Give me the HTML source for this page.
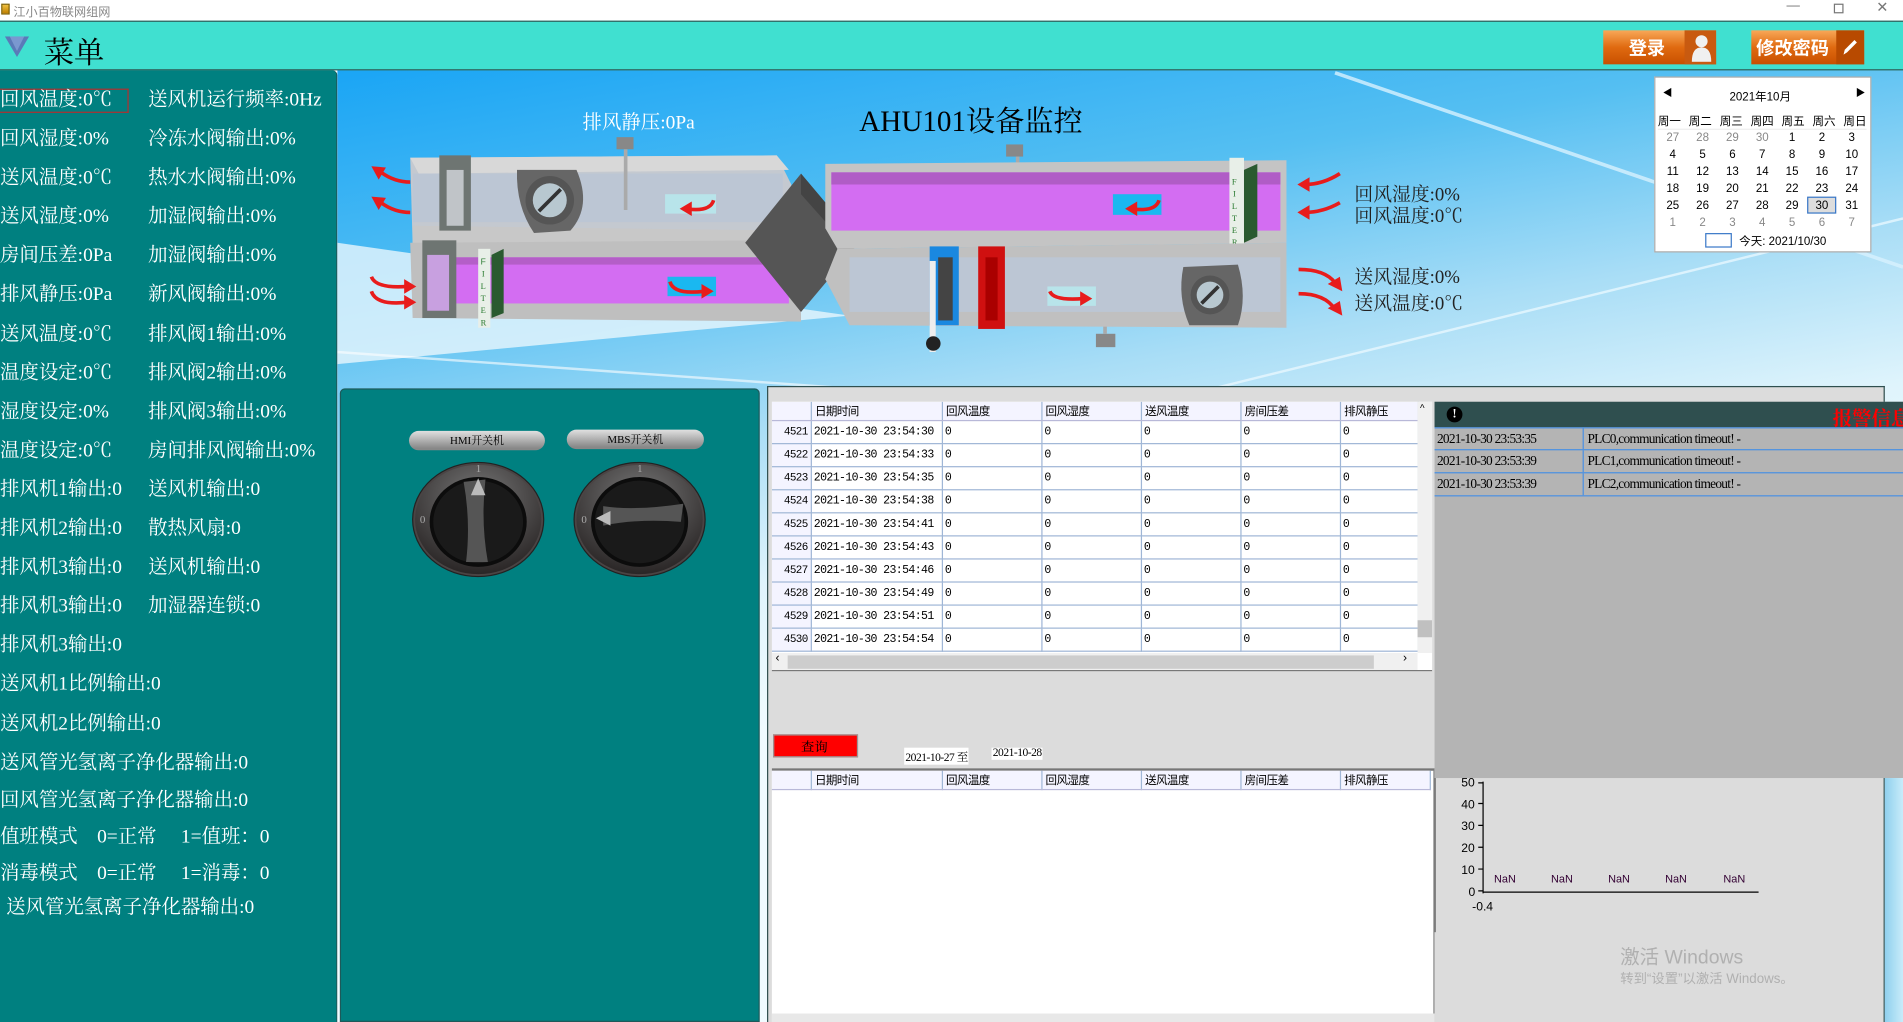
<!DOCTYPE html>
<html><head><meta charset="utf-8">
<style>
*{margin:0;padding:0;box-sizing:border-box}
html,body{width:1903px;height:1022px;overflow:hidden;background:#fff}
#w{position:absolute;left:0;top:0;width:1568px;height:842px;transform-origin:0 0;transform:scale(1.21365,1.21378);font-family:"Liberation Serif","Noto Serif CJK SC",serif;overflow:hidden}
.a{position:absolute;white-space:nowrap}
.sans{font-family:"Liberation Sans","Noto Sans CJK SC",sans-serif}
.lt{color:#fff;font-size:16px;line-height:18px}
table{border-collapse:collapse;font-size:9.5px;font-family:"Liberation Mono","Noto Sans CJK SC",monospace;letter-spacing:-0.5px}
td{border-right:1px solid #9fb6d6;border-bottom:1px solid #9fb6d6;height:19px;padding-left:2px;background:#fff}
th{font-weight:normal;text-align:left;padding-left:3px;height:15px;background:#f4f4ff;border-right:1px solid #9fb6d6;border-bottom:1px solid #b8b8d8}
td.rh{background:#f4f4ff;text-align:right;padding-right:2px;font-size:9px}
.cal{font-family:"Liberation Sans","Noto Sans CJK SC",sans-serif;font-size:9.5px}
</style></head><body><div id="w">
<div class="a" style="left:0;top:0;width:1568px;height:17px;background:#fff"></div>
<div class="a" style="left:1px;top:3px;width:7px;height:9px;background:linear-gradient(#f0c040,#c08000);border:1px solid #806000"></div>
<div class="a sans" style="left:11px;top:1px;font-size:10px;color:#888">江小百物联网组网</div>
<div class="a sans" style="left:1472px;top:-1px;font-size:11px;color:#777">—</div>
<div class="a" style="left:1511px;top:3px;width:8px;height:8px;border:1px solid #777"></div>
<div class="a sans" style="left:1546px;top:-1px;font-size:12px;color:#777">✕</div>
<div class="a" style="left:278px;top:57px;width:1290px;height:785px;background:linear-gradient(170deg,#1aa5f5 0%,#55bff2 20%,#a8ddf6 35%,#dff4fc 48%,#f0fbff 60%)"></div>
<svg class="a" style="left:0;top:0" width="1568" height="842" viewBox="0 0 1568 842">
<polygon points="278,200 700,260 278,300" fill="#e8f6fc" opacity=".8"/>
<line x1="1100" y1="60" x2="1568" y2="220" stroke="#d8f2ff" stroke-width="3" opacity=".8"/>
<line x1="1000" y1="320" x2="1568" y2="180" stroke="#e8f8ff" stroke-width="2" opacity=".8"/>
<line x1="278" y1="290" x2="700" y2="320" stroke="#fff" stroke-width="2" opacity=".6"/>
<polygon points="338,130 640,128 652,152 652,200 340,202" fill="#c4c9d0"/>
<polygon points="338,130 640,128 650,140 345,143" fill="#d8d8d8"/>
<rect x="340" y="143" width="305" height="40" fill="#bcc6d4"/>
<polygon points="340,186 650,190 650,205 340,200" fill="#c8c8c8"/>
<polygon points="338,200 640,198 660,210 660,265 340,262" fill="#bfbfbf"/>
<rect x="350" y="212" width="300" height="38" fill="#d36df2"/>
<rect x="350" y="212" width="300" height="6" fill="#b45ec8"/>
<rect x="362" y="128" width="26" height="62" fill="#6e7572"/><rect x="368" y="140" width="14" height="46" fill="#c0c4c8"/>
<rect x="348" y="198" width="28" height="64" fill="#6e7572"/><rect x="352" y="210" width="18" height="46" fill="#c8a0e0"/>
<rect x="394" y="205" width="10" height="65" fill="#e8efe8"/><polygon points="405,210 415,205 415,258 405,262" fill="#2a5a30"/>
<text x="396" y="218" font-size="7" fill="#2a7a30" font-family="Liberation Sans">F</text><text x="397" y="228" font-size="7" fill="#2a7a30">I</text><text x="396" y="238" font-size="7" fill="#2a7a30">L</text><text x="396" y="248" font-size="7" fill="#2a7a30">T</text><text x="396" y="258" font-size="7" fill="#2a7a30">E</text><text x="396" y="268" font-size="7" fill="#2a7a30">R</text>
<path d="M426,140 L475,140 Q488,170 470,190 L440,192 Q425,170 426,140Z" fill="#666"/>
<circle cx="453" cy="165" r="20" fill="#555"/><circle cx="453" cy="165" r="14" fill="#b8c8d0"/>
<line x1="444" y1="174" x2="462" y2="156" stroke="#333" stroke-width="3"/>
<rect x="508" y="113" width="14" height="10" fill="#888"/><rect x="514" y="123" width="3" height="50" fill="#aaa"/>
<rect x="829" y="119" width="14" height="10" fill="#888"/><rect x="837" y="129" width="3" height="50" fill="#aaa"/>
<rect x="903" y="275" width="16" height="11" fill="#888"/><rect x="909" y="232" width="3" height="43" fill="#aaa"/>
<polygon points="660,143 708,200 660,257 614,200" fill="#555"/>
<polygon points="660,143 708,200 700,205 660,160" fill="#444"/>
<polygon points="680,135 1060,132 1060,200 690,205 680,188" fill="#c4c4c4"/>
<rect x="685" y="142" width="370" height="48" fill="#d36df2"/>
<rect x="685" y="142" width="370" height="10" fill="#b05cc6"/>
<rect x="1013" y="130" width="12" height="75" fill="#e8efe8"/><polygon points="1025,140 1036,135 1036,195 1025,200" fill="#2a5a30"/>
<text x="1015" y="152" font-size="7" fill="#2a7a30">F</text><text x="1016" y="162" font-size="7" fill="#2a7a30">I</text><text x="1015" y="172" font-size="7" fill="#2a7a30">L</text><text x="1015" y="182" font-size="7" fill="#2a7a30">T</text><text x="1015" y="192" font-size="7" fill="#2a7a30">E</text><text x="1015" y="202" font-size="7" fill="#2a7a30">R</text>
<polygon points="690,205 1060,200 1060,270 700,268 680,230" fill="#c0c0c0"/>
<rect x="700" y="212" width="355" height="45" fill="#bcc6d4"/>
<rect x="766" y="203" width="24" height="65" fill="#1a88e0"/><rect x="773" y="212" width="12" height="52" fill="#444"/>
<rect x="766" y="215" width="5" height="75" fill="#eee"/><ellipse cx="769" cy="283" rx="6" ry="6" fill="#222"/>
<rect x="806" y="203" width="22" height="68" fill="#d01010"/><rect x="812" y="212" width="10" height="52" fill="#a00"/>
<path d="M975,220 L1020,218 Q1028,245 1020,268 L980,268 Q970,245 975,220Z" fill="#666"/>
<circle cx="997" cy="243" r="16" fill="#555"/><circle cx="997" cy="243" r="11" fill="#b8c8d0"/>
<line x1="990" y1="250" x2="1004" y2="236" stroke="#333" stroke-width="3"/>
<rect x="548" y="160" width="42" height="16" fill="#b8e4ea"/><rect x="917" y="160" width="40" height="17" fill="#1ab8f0"/>
<rect x="550" y="228" width="40" height="16" fill="#1ab8f0"/><rect x="863" y="236" width="40" height="16" fill="#b8e4ea"/>
<g fill="none" stroke="#e81c1c" stroke-width="3">
<path d="M588,165 Q585,175 565,172"/><path d="M955,165 Q952,175 932,172"/>
<path d="M552,232 Q555,243 580,240"/><path d="M865,240 Q868,248 893,246"/>
<path d="M338,150 Q325,150 314,142"/><path d="M338,175 Q325,175 314,167"/>
<path d="M306,228 Q310,238 336,236"/><path d="M306,240 Q310,252 336,249"/>
<path d="M1104,143 Q1090,152 1075,152"/><path d="M1104,167 Q1090,175 1075,175"/>
<path d="M1070,222 Q1092,222 1100,233"/><path d="M1070,242 Q1092,242 1100,255"/>
</g>
<g fill="#e81c1c">
<polygon points="560,172 570,166 570,178"/><polygon points="927,172 937,166 937,178"/>
<polygon points="588,240 578,234 578,246"/><polygon points="900,246 890,240 890,252"/>
<polygon points="306,137 318,138 312,148"/><polygon points="306,162 318,163 312,173"/>
<polygon points="343,236 333,230 333,242"/><polygon points="343,249 333,243 333,255"/>
<polygon points="1069,152 1079,146 1079,158"/><polygon points="1069,175 1079,169 1079,181"/>
<polygon points="1106,240 1094,234 1104,228"/><polygon points="1106,260 1094,254 1104,248"/>
</g>
</svg>
<div class="a" style="left:480px;top:88px;font-size:16px;color:#fff">排风静压:0Pa</div>
<div class="a" style="left:708px;top:80px;font-size:24px;color:#000">AHU101设备监控</div>
<div class="a" style="left:1116px;top:152px;font-size:15.5px;line-height:18px;color:#222">回风湿度:0%<br>回风温度:0℃</div>
<div class="a" style="left:1116px;top:218px;font-size:15.5px;line-height:22px;color:#222">送风湿度:0%<br>送风温度:0℃</div>
<div class="a" style="left:0;top:17px;width:1568px;height:41px;background:#40e0d0;border-bottom:1px solid #2f5f5a;border-top:1px solid #2f5f5a"></div>
<svg class="a" style="left:4px;top:30px" width="20" height="18"><polygon points="0,0 20,0 10,17" fill="#5a7ab8"/><polygon points="4,0 16,0 10,12" fill="#7a98d0"/></svg>
<div class="a" style="left:36px;top:24px;font-size:25px;color:#000">菜单</div>
<div class="a sans" style="left:1321px;top:25px;width:93px;height:28px;background:linear-gradient(#f8a858,#e06a10 50%,#c85000);"></div>
<div class="a" style="left:1388px;top:25px;width:26px;height:28px;background:#c85a10"></div>
<svg class="a" style="left:1393px;top:27px" width="18" height="24"><circle cx="9" cy="7" r="5" fill="#f0f0f0"/><path d="M1,24 Q1,12 9,12 Q17,12 17,24Z" fill="#f0f0f0"/></svg>
<div class="a sans" style="left:1342px;top:29px;font-size:15px;font-weight:bold;color:#fff">登录</div>
<div class="a" style="left:1443px;top:25px;width:93px;height:28px;background:linear-gradient(#f8a858,#e06a10 50%,#c85000)"></div>
<div class="a" style="left:1513px;top:25px;width:23px;height:28px;background:#b84a00"></div>
<div class="a sans" style="left:1447px;top:29px;font-size:15px;font-weight:bold;color:#fff">修改密码</div>
<svg class="a" style="left:1516px;top:30px" width="16" height="18"><path d="M3,15 L4,11 L12,3 L14,5 L6,13Z" fill="#fff"/></svg>
<div class="a cal" style="left:1363px;top:63px;width:179px;height:145px;background:#fff;border:1px solid #aaa"></div>
<div class="a cal" style="left:1370px;top:71px;font-size:8px">◀</div><div class="a cal" style="left:1529px;top:71px;font-size:8px">▶</div>
<div class="a cal" style="left:1425px;top:72px">2021年10月</div>
<div class="a cal" style="left:1366px;top:92px;width:172px;display:flex;justify-content:space-between;font-size:9.5px;border-bottom:1px solid #eee">周一<span>周二</span><span>周三</span><span>周四</span><span>周五</span><span>周六</span><span>周日</span></div>
<div class="a" style="left:1489px;top:162px;width:24px;height:14px;background:#ddd;border:1px solid #3a78c8"></div>
<div class="a" style="left:1405px;top:192px;width:22px;height:12px;border:1px solid #3a78c8"></div>
<div class="a cal" style="left:1433px;top:191px">今天: 2021/10/30</div>
<div class="a cal" id="cd" style="left:1366px;top:107px;width:172px;line-height:14px"></div>
<div class="a" style="left:0;top:58px;width:278px;height:784px;background:#008080;border-radius:0 4px 0 0;border-right:1px solid #1d5a5a"></div>
<div class="a" style="left:0;top:73px;width:106px;height:20px;border:1px solid #b03030;border-left:none"></div>
<div class="a lt" style="left:0;top:67px;line-height:32.1px">回风温度:0℃<br>回风湿度:0%<br>送风温度:0℃<br>送风湿度:0%<br>房间压差:0Pa<br>排风静压:0Pa<br>送风温度:0℃<br>温度设定:0℃<br>湿度设定:0%<br>温度设定:0℃<br>排风机1输出:0<br>排风机2输出:0<br>排风机3输出:0<br>排风机3输出:0<br>排风机3输出:0<br>送风机1比例输出:0<br>送风机2比例输出:0<br>送风管光氢离子净化器输出:0</div>
<div class="a lt" style="left:122px;top:67px;line-height:32.1px">送风机运行频率:0Hz<br>冷冻水阀输出:0%<br>热水水阀输出:0%<br>加湿阀输出:0%<br>加湿阀输出:0%<br>新风阀输出:0%<br>排风阀1输出:0%<br>排风阀2输出:0%<br>排风阀3输出:0%<br>房间排风阀输出:0%<br>送风机输出:0<br>散热风扇:0<br>送风机输出:0<br>加湿器连锁:0</div>
<div class="a lt" style="left:0;top:651px">回风管光氢离子净化器输出:0</div>
<div class="a lt" style="left:0;top:681px">值班模式　0=正常　 1=值班：0</div>
<div class="a lt" style="left:0;top:711px">消毒模式　0=正常　 1=消毒：0</div>
<div class="a lt" style="left:5px;top:739px">送风管光氢离子净化器输出:0</div>
<div class="a" style="left:280px;top:320px;width:346px;height:522px;background:#008080;border-radius:4px 4px 0 0;border:1px solid #1d5a5a"></div>
<div class="a" style="left:337px;top:355px;width:112px;height:16px;border-radius:8px;background:linear-gradient(#e0e0e0,#888 90%);font-size:9px;text-align:center;line-height:16px">HMI开关机</div>
<div class="a" style="left:467px;top:354px;width:113px;height:16px;border-radius:8px;background:linear-gradient(#e0e0e0,#888 90%);font-size:9px;text-align:center;line-height:16px">MBS开关机</div>
<svg class="a" style="left:330px;top:375px" width="270" height="110">
<g><ellipse cx="64" cy="53" rx="54" ry="47" fill="#4a4444" stroke="#222"/><ellipse cx="64" cy="53" rx="52" ry="45" fill="url(#rg)"/><ellipse cx="64" cy="55" rx="40" ry="37" fill="#0c0c0c"/><ellipse cx="64" cy="55" rx="37" ry="34" fill="#1a1a1a"/>
<path d="M52,22 L70,20 Q66,55 72,88 L54,88 Q58,55 52,22Z" fill="#555"/><polygon points="64,19 58,33 70,33" fill="#bbb"/>
<text x="62" y="14" font-size="9" fill="#aaa">1</text><text x="16" y="56" font-size="9" fill="#aaa">0</text></g>
<g transform="translate(133,0)"><ellipse cx="64" cy="53" rx="54" ry="47" fill="#4a4444" stroke="#222"/><ellipse cx="64" cy="53" rx="52" ry="45" fill="url(#rg)"/><ellipse cx="64" cy="55" rx="40" ry="37" fill="#0c0c0c"/><ellipse cx="64" cy="55" rx="37" ry="34" fill="#1a1a1a"/>
<path d="M34,42 Q60,46 100,40 L98,55 Q64,52 34,58Z" fill="#555"/><polygon points="28,52 40,46 40,58" fill="#bbb"/>
<text x="62" y="14" font-size="9" fill="#aaa">1</text><text x="16" y="56" font-size="9" fill="#aaa">0</text></g>
<defs><radialGradient id="rg" cx=".5" cy=".3" r=".7"><stop offset="0" stop-color="#777"/><stop offset="1" stop-color="#2a2626"/></radialGradient></defs>
</svg>
<div class="a" style="left:632px;top:318px;width:921px;height:524px;background:#dcdcdc;border-top:1px solid #2f4f4f;border-left:1px solid #2f4f4f;border-right:1px solid #2f4f4f"></div>
<div class="a" style="left:636px;top:331px;width:544px;height:222px;background:#fff;border-bottom:1px solid #777;overflow:hidden">
<table id="t1"><tr><th style="width:32px"></th><th style="width:108px">日期时间</th><th style="width:82px">回风温度</th><th style="width:82px">回风湿度</th><th style="width:82px">送风温度</th><th style="width:82px">房间压差</th><th style="width:64px">排风静压</th></tr></table>
<div class="a" style="left:532px;top:0;width:12px;height:207px;background:#f0f0f0"></div>
<div class="a" style="left:532px;top:180px;width:12px;height:14px;background:#c0c0c0"></div>
<div class="a" style="left:0;top:207px;width:532px;height:15px;background:#f0f0f0"></div>
<div class="a" style="left:13px;top:209px;width:483px;height:11px;background:#cdcdcd"></div>
<div class="a sans" style="left:3px;top:206px;font-size:10px">‹</div><div class="a sans" style="left:520px;top:206px;font-size:10px">›</div>
<div class="a sans" style="left:534px;top:1px;font-size:8px">^</div>
</div>
<div class="a" style="left:637px;top:605px;width:70px;height:19px;border:1px solid #999;background:#f00"></div>
<div class="a" style="left:660px;top:607px;font-size:11px">查询</div>
<div class="a" style="left:745px;top:616px;font-size:9.5px;background:#fff;padding:0 1px;letter-spacing:-0.4px">2021-10-27 至</div>
<div class="a" style="left:817px;top:616px;font-size:9.5px;background:#fff;padding:0 1px;letter-spacing:-0.4px">2021-10-28</div>
<div class="a" style="left:636px;top:633px;width:546px;height:209px;background:#fff;border-top:2px solid #777;border-right:1px solid #888">
<table><tr><th style="width:32px"></th><th style="width:108px">日期时间</th><th style="width:82px">回风温度</th><th style="width:82px">回风湿度</th><th style="width:82px">送风温度</th><th style="width:82px">房间压差</th><th style="width:74px">排风静压</th></tr></table>
<div class="a" style="left:0;top:200px;width:546px;height:9px;background:#e8e8e8"></div>
</div>
<div class="a" style="left:1182px;top:331px;width:386px;height:310px;background:#b4b4b4"></div>
<div class="a" style="left:1182px;top:331px;width:386px;height:21px;background:#2f4f4f"></div>
<div class="a" style="left:1192px;top:335px;width:13px;height:13px;border-radius:50%;background:#000;color:#fff;font-size:10px;text-align:center;line-height:13px;font-weight:bold">!</div>
<div class="a" style="left:1510px;top:332px;font-size:16px;font-weight:bold;color:#f00">报警信息</div>
<div class="a" style="left:1182px;top:352px;width:386px;font-size:11px;letter-spacing:-0.6px">
<div style="height:19px;border-bottom:1px solid #4a90e2;border-top:1px solid #4a90e2;display:flex;line-height:18px"><span style="width:123px;border-right:1px solid #4a90e2;padding-left:2px">2021-10-30 23:53:35</span><span style="padding-left:3px">PLC0,communication timeout! -</span></div>
<div style="height:19px;border-bottom:1px solid #4a90e2;display:flex;line-height:18px"><span style="width:123px;border-right:1px solid #4a90e2;padding-left:2px">2021-10-30 23:53:39</span><span style="padding-left:3px">PLC1,communication timeout! -</span></div>
<div style="height:19px;border-bottom:1px solid #4a90e2;display:flex;line-height:18px"><span style="width:123px;border-right:1px solid #4a90e2;padding-left:2px">2021-10-30 23:53:39</span><span style="padding-left:3px">PLC2,communication timeout! -</span></div>
</div>
<div class="a" style="left:1553px;top:641px;width:15px;height:201px;background:linear-gradient(90deg,#8fd0ee,#c8ecfa)"></div>
<div class="a" style="left:1182px;top:641px;width:1px;height:127px;background:#666"></div>
<svg class="a sans" style="left:1182px;top:641px" width="370" height="120" font-family="Liberation Sans" font-size="10">
<line x1="40" y1="3" x2="40" y2="95" stroke="#000"/><line x1="40" y1="94" x2="267" y2="94" stroke="#000"/>
<g stroke="#000"><line x1="36" y1="4" x2="40" y2="4"/><line x1="36" y1="21" x2="40" y2="21"/><line x1="36" y1="39" x2="40" y2="39"/><line x1="36" y1="57" x2="40" y2="57"/><line x1="36" y1="75" x2="40" y2="75"/><line x1="36" y1="93" x2="40" y2="93"/></g>
<text x="22" y="7">50</text><text x="22" y="25">40</text><text x="22" y="43">30</text><text x="22" y="61">20</text><text x="22" y="79">10</text><text x="28" y="97">0</text>
<text x="31" y="109">-0.4</text>
<g font-size="9" fill="#303"><text x="49" y="86">NaN</text><text x="96" y="86">NaN</text><text x="143" y="86">NaN</text><text x="190" y="86">NaN</text><text x="238" y="86">NaN</text></g>
</svg>
<div class="a sans" style="left:1335px;top:775px;font-size:16px;color:#b0b0b0">激活 Windows</div>
<div class="a sans" style="left:1335px;top:798px;font-size:11px;color:#b0b0b0">转到“设置”以激活 Windows。</div>
<script>
var t=document.getElementById('t1'),h='';
var tm=['30','33','35','38','41','43','46','49','51','54'];
for(var i=0;i<10;i++){h+='<tr><td class="rh">'+(4521+i)+'</td><td>2021-10-30 23:54:'+tm[i]+'</td><td>0</td><td>0</td><td>0</td><td>0</td><td>0</td></tr>';}
t.insertAdjacentHTML('beforeend',h);
var d=[27,28,29,30,1,2,3,4,5,6,7,8,9,10,11,12,13,14,15,16,17,18,19,20,21,22,23,24,25,26,27,28,29,30,31,1,2,3,4,5,6,7],c='';
for(var r=0;r<6;r++){c+='<div style="display:flex">';for(var k=0;k<7;k++){var n=r*7+k,g=(n<4||n>34);c+='<span style="width:24.6px;text-align:center;color:'+(g?'#888':'#000')+'">'+d[n]+'</span>';}c+='</div>';}
document.getElementById('cd').innerHTML=c;
</script>
</div></body></html>
